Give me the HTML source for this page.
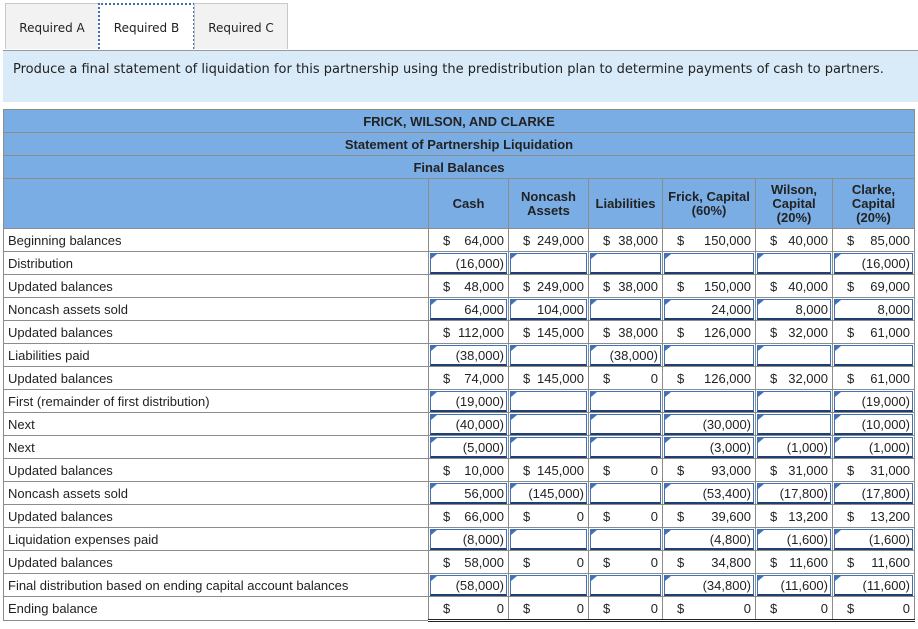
<!DOCTYPE html>
<html><head><meta charset="utf-8"><style>
body{margin:0;background:#fff;width:918px;height:629px;overflow:hidden;position:relative;font-family:"Liberation Sans",Arial,sans-serif;}
.tab{position:absolute;top:3px;height:46px;font-family:"DejaVu Sans",Verdana,sans-serif;font-size:12px;color:#222;text-align:center;line-height:48px;background:#f2f2f2;border:1px solid #c8c8c8;border-bottom:none;box-sizing:border-box}
.info{position:absolute;left:3px;top:50px;width:915px;height:52px;background:#d9ebf8;border-top:1px solid #999;box-sizing:border-box;font-family:"DejaVu Sans",Verdana,sans-serif;font-size:13px;color:#222;padding:11px 0 0 10px}
table{position:absolute;left:3px;top:109px;border-collapse:collapse;table-layout:fixed;width:911px;font-size:13px;color:#222}
td{border:1px solid #8c8c8c;height:22px;padding:0;position:relative;white-space:nowrap}
.h td{background:#7aade4;font-weight:bold;text-align:center}
.lab{padding-left:4px}
.n{text-align:right;padding-right:4px}
.n b{font-weight:normal;position:absolute;left:14px;top:4px}
.i{text-align:right}
.i div{position:absolute;left:1px;right:1px;top:1px;bottom:0;border:1px solid #3f72b8;border-bottom:2px solid #1f3f70;padding-right:2px;line-height:19px;background:#fff}
.i div:before{content:"";position:absolute;left:0;top:0;border-left:6px solid #3f72b8;border-bottom:5px solid transparent}
.last td.n{border-bottom:3px double #222}
</style></head><body>
<div class="tab" style="left:5px;width:94px">Required A</div>
<div class="tab" style="left:98px;width:97px;background:#fff;border:2px dotted #3f6fb0;border-bottom:none;line-height:46px">Required B</div>
<div class="tab" style="left:194px;width:94px">Required C</div>
<div class="info">Produce a final statement of liquidation for this partnership using the predistribution plan to determine payments of cash to partners.</div>
<table>
<colgroup><col style="width:425px"><col style="width:80px"><col style="width:80px"><col style="width:74px"><col style="width:93px"><col style="width:77px"><col style="width:82px"></colgroup>
<tr class="h"><td colspan="7">FRICK, WILSON, AND CLARKE</td></tr>
<tr class="h"><td colspan="7">Statement of Partnership Liquidation</td></tr>
<tr class="h"><td colspan="7">Final Balances</td></tr>
<tr class="h" style="line-height:14px"><td style="height:49px"></td><td>Cash</td><td>Noncash<br>Assets</td><td>Liabilities</td><td>Frick, Capital<br>(60%)</td><td>Wilson,<br>Capital<br>(20%)</td><td>Clarke,<br>Capital<br>(20%)</td></tr>
<tr><td class="lab">Beginning balances</td><td class="n"><b>$</b>64,000</td><td class="n"><b>$</b>249,000</td><td class="n"><b>$</b>38,000</td><td class="n"><b>$</b>150,000</td><td class="n"><b>$</b>40,000</td><td class="n"><b>$</b>85,000</td></tr>
<tr><td class="lab">Distribution</td><td class="i"><div>(16,000)</div></td><td class="i"><div></div></td><td class="i"><div></div></td><td class="i"><div></div></td><td class="i"><div></div></td><td class="i"><div>(16,000)</div></td></tr>
<tr><td class="lab">Updated balances</td><td class="n"><b>$</b>48,000</td><td class="n"><b>$</b>249,000</td><td class="n"><b>$</b>38,000</td><td class="n"><b>$</b>150,000</td><td class="n"><b>$</b>40,000</td><td class="n"><b>$</b>69,000</td></tr>
<tr><td class="lab">Noncash assets sold</td><td class="i"><div>64,000</div></td><td class="i"><div>104,000</div></td><td class="i"><div></div></td><td class="i"><div>24,000</div></td><td class="i"><div>8,000</div></td><td class="i"><div>8,000</div></td></tr>
<tr><td class="lab">Updated balances</td><td class="n"><b>$</b>112,000</td><td class="n"><b>$</b>145,000</td><td class="n"><b>$</b>38,000</td><td class="n"><b>$</b>126,000</td><td class="n"><b>$</b>32,000</td><td class="n"><b>$</b>61,000</td></tr>
<tr><td class="lab">Liabilities paid</td><td class="i"><div>(38,000)</div></td><td class="i"><div></div></td><td class="i"><div>(38,000)</div></td><td class="i"><div></div></td><td class="i"><div></div></td><td class="i"><div></div></td></tr>
<tr><td class="lab">Updated balances</td><td class="n"><b>$</b>74,000</td><td class="n"><b>$</b>145,000</td><td class="n"><b>$</b>0</td><td class="n"><b>$</b>126,000</td><td class="n"><b>$</b>32,000</td><td class="n"><b>$</b>61,000</td></tr>
<tr><td class="lab">First (remainder of first distribution)</td><td class="i"><div>(19,000)</div></td><td class="i"><div></div></td><td class="i"><div></div></td><td class="i"><div></div></td><td class="i"><div></div></td><td class="i"><div>(19,000)</div></td></tr>
<tr><td class="lab">Next</td><td class="i"><div>(40,000)</div></td><td class="i"><div></div></td><td class="i"><div></div></td><td class="i"><div>(30,000)</div></td><td class="i"><div></div></td><td class="i"><div>(10,000)</div></td></tr>
<tr><td class="lab">Next</td><td class="i"><div>(5,000)</div></td><td class="i"><div></div></td><td class="i"><div></div></td><td class="i"><div>(3,000)</div></td><td class="i"><div>(1,000)</div></td><td class="i"><div>(1,000)</div></td></tr>
<tr><td class="lab">Updated balances</td><td class="n"><b>$</b>10,000</td><td class="n"><b>$</b>145,000</td><td class="n"><b>$</b>0</td><td class="n"><b>$</b>93,000</td><td class="n"><b>$</b>31,000</td><td class="n"><b>$</b>31,000</td></tr>
<tr><td class="lab">Noncash assets sold</td><td class="i"><div>56,000</div></td><td class="i"><div>(145,000)</div></td><td class="i"><div></div></td><td class="i"><div>(53,400)</div></td><td class="i"><div>(17,800)</div></td><td class="i"><div>(17,800)</div></td></tr>
<tr><td class="lab">Updated balances</td><td class="n"><b>$</b>66,000</td><td class="n"><b>$</b>0</td><td class="n"><b>$</b>0</td><td class="n"><b>$</b>39,600</td><td class="n"><b>$</b>13,200</td><td class="n"><b>$</b>13,200</td></tr>
<tr><td class="lab">Liquidation expenses paid</td><td class="i"><div>(8,000)</div></td><td class="i"><div></div></td><td class="i"><div></div></td><td class="i"><div>(4,800)</div></td><td class="i"><div>(1,600)</div></td><td class="i"><div>(1,600)</div></td></tr>
<tr><td class="lab">Updated balances</td><td class="n"><b>$</b>58,000</td><td class="n"><b>$</b>0</td><td class="n"><b>$</b>0</td><td class="n"><b>$</b>34,800</td><td class="n"><b>$</b>11,600</td><td class="n"><b>$</b>11,600</td></tr>
<tr><td class="lab">Final distribution based on ending capital account balances</td><td class="i"><div>(58,000)</div></td><td class="i"><div></div></td><td class="i"><div></div></td><td class="i"><div>(34,800)</div></td><td class="i"><div>(11,600)</div></td><td class="i"><div>(11,600)</div></td></tr>
<tr class="last"><td class="lab">Ending balance</td><td class="n"><b>$</b>0</td><td class="n"><b>$</b>0</td><td class="n"><b>$</b>0</td><td class="n"><b>$</b>0</td><td class="n"><b>$</b>0</td><td class="n"><b>$</b>0</td></tr>
</table>
</body></html>
